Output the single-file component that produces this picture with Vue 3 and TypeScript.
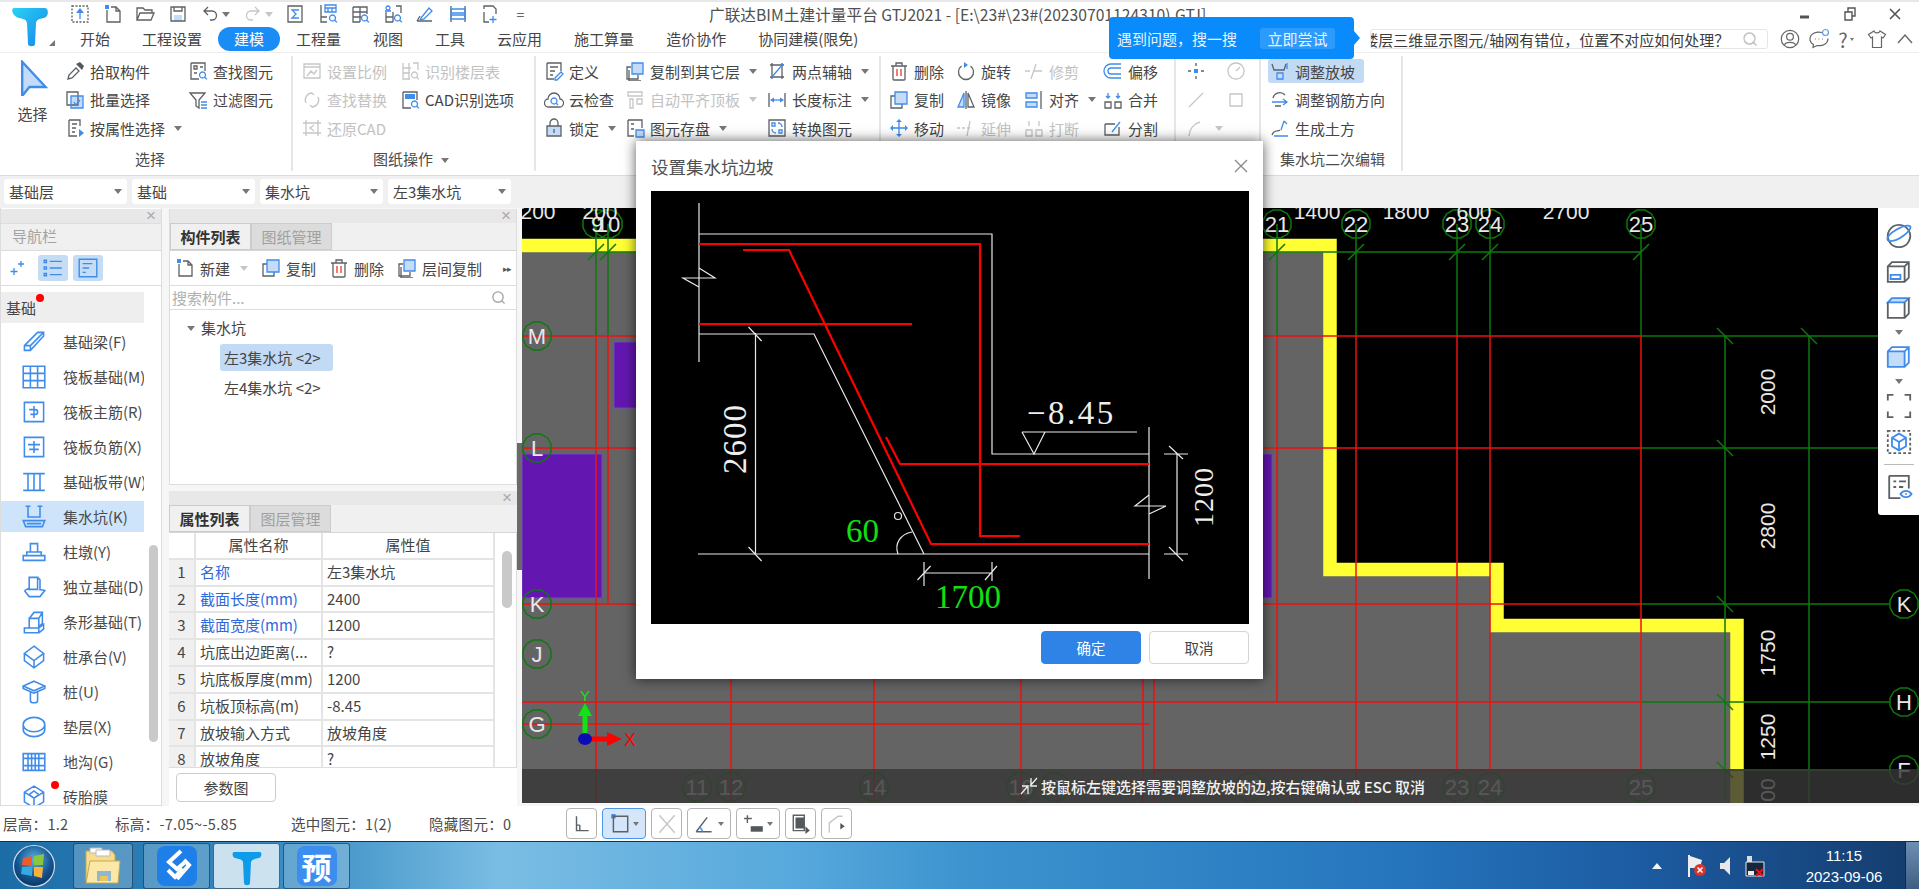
<template>
  <div class="app">
    <header class="top">
      <div class="logo">
        <svg width="42" height="42" viewBox="0 0 42 42">
          <defs>
            <linearGradient id="tlogo" x1="0" y1="0" x2="1" y2="1">
              <stop offset="0" stop-color="#2bd2f0" />
              <stop offset="1" stop-color="#1484f0" />
            </linearGradient>
          </defs>
          <path fill="url(#tlogo)" d="M4 2h31c4 0 4 9-1 10-5 1-7 1-8 5l-1 21c0 3-7 3-7 0l-1-21c-1-4-3-4-8-5C3 11 0 2 4 2z" />
        </svg>
        <i class="logo-tri"></i>
      </div>
      <div class="top-rows">
        <div class="row-qa">
          <div class="qa">
            <template v-for="q in quick" :key="q.n">
              <span class="qa-item" :class="{ 'qa-caret': q.c }">
                <Ico :n="q.n" />
                <i v-if="q.c" class="tri" :class="{ 'tri-off': q.n === 'redo' }"></i>
              </span>
            </template>
            <span class="qa-more">=</span>
          </div>
          <div class="title">广联达BIM土建计量平台 GTJ2021 - [E:\23#\23#(20230701124310).GTJ]</div>
          <div class="win">
            <svg width="14" height="14" viewBox="0 0 14 14"><path d="M2 10h9" stroke="#555" stroke-width="3" /></svg>
            <svg width="14" height="14" viewBox="0 0 14 14" fill="none" stroke="#555" stroke-width="1.4"><path d="M2 5h7v8H2z M5 5V1h7v8H9" /></svg>
            <svg width="14" height="14" viewBox="0 0 14 14" fill="none" stroke="#555" stroke-width="1.6"><path d="M2 2l10 10 M12 2L2 12" /></svg>
          </div>
        </div>
        <div class="row-tabs">
          <nav class="tabs">
            <span v-for="t in tabs" :key="t" class="tab" :class="{ 'tab-on': t === '建模' }">{{ t }}</span>
          </nav>
          <div class="search">
            <span class="search-text">楼层三维显示图元/轴网有错位，位置不对应如何处理？</span>
            <svg width="16" height="16" viewBox="0 0 16 16" fill="none" stroke="#c4c4c4" stroke-width="1.6"><path d="M7.5 2a5.5 5.5 0 1 1-.01 0z M11.5 11.5l3 3" /></svg>
          </div>
          <div class="user-tools">
            <svg width="20" height="20" viewBox="0 0 20 20" fill="none" stroke="#666" stroke-width="1.2"><circle cx="10" cy="10" r="8.7" /><circle cx="10" cy="7.8" r="3.4" /><path d="M4.5 16c1-3.4 10-3.4 11 0" /></svg>
            <svg width="22" height="22" viewBox="0 0 22 22" fill="none" stroke="#666" stroke-width="1.2"><path d="M14 4.5C8 3 2 6 2 11c0 2.5 1.5 4.5 3.5 5.500l-.5 3 4-2c6 1 11-2 11-7" /><path d="M7 11h.8 M10.5 11h.8 M14 11h.8" /><circle cx="17.5" cy="4.5" r="3" stroke="#5a9ee8" /></svg>
            <span class="help">?<i class="tri tri-sm"></i></span>
            <svg width="20" height="20" viewBox="0 0 20 20" fill="none" stroke="#666" stroke-width="1.2"><path d="M7 2L1.5 5.5 4 9l1.5-1v10.5h9V8L16 9l2.5-3.5L13 2c-.5 2.5-5.5 2.5-6 0z" /></svg>
            <svg width="20" height="20" viewBox="0 0 20 20" fill="none" stroke="#666" stroke-width="1.4"><path d="M3 14l7-8 7 8" /></svg>
          </div>
        </div>
      </div>
    </header>

    <section class="ribbon">
      <div v-for="g in groups" :key="g.key" class="rg" :style="{ width: g.w + 'px' }">
        <div class="rg-cols" :style="{ paddingLeft: g.pad + 'px' }">
          <div v-if="g.big" class="big">
            <Ico n="arrow" :s="36" />
            <span>选择</span>
          </div>
          <div v-for="(c, ci) in g.cols" :key="ci" class="rg-col" :style="{ width: c.w + 'px' }">
            <div v-for="it in c.items" :key="it.i + (it.t || '')" class="rb" :class="{ 'rb-off': it.off, 'rb-on': it.on }">
              <Ico :n="it.i" />
              <span v-if="it.t" class="rb-t">{{ it.t }}</span>
              <i v-if="it.c" class="tri" :class="{ 'tri-off': it.off }"></i>
            </div>
          </div>
        </div>
        <div class="rg-label" :style="{ paddingLeft: g.lx + 'px' }">
          {{ g.label }}<i v-if="g.lc" class="tri tri-label"></i>
        </div>
      </div>
    </section>

    <div class="combos">
      <div v-for="c in combos" :key="c" class="combo"><span>{{ c }}</span><i class="tri"></i></div>
    </div>

    <main class="main">
      <aside class="nav">
        <div class="strip"><span class="strip-x">×</span></div>
        <div class="nav-head">导航栏</div>
        <div class="nav-tools">
          <Ico n="sparkle" class="nav-spark" />
          <span class="nav-tool"><Ico n="listv" :s="22" /></span>
          <span class="nav-tool"><Ico n="cardv" :s="22" /></span>
        </div>
        <div class="nav-sec">基础<i class="dot"></i></div>
        <ul class="nav-list">
          <li v-for="n in navItems" :key="n.t" class="nav-item" :class="{ 'nav-on': n.on }">
            <Ico :n="n.i" :s="24" />
            <span>{{ n.t }}</span>
            <i v-if="n.dot" class="dot dot-item"></i>
          </li>
        </ul>
        <div class="nav-scroll"></div>
      </aside>

      <div class="panels">
        <section class="panel panel-list">
          <div class="strip"><span class="strip-x">×</span></div>
          <div class="ptabs"><span class="ptab ptab-on">构件列表</span><span class="ptab">图纸管理</span></div>
          <div class="ptools">
            <span class="ptool"><Ico n="newdoc" /> 新建 <i class="tri tri-off tri-new"></i></span>
            <span class="ptool"><Ico n="copy" /> 复制</span>
            <span class="ptool"><Ico n="del" /> 删除</span>
            <span class="ptool"><Ico n="copyl" /> 层间复制</span>
            <span class="ptool-more">▸▸</span>
          </div>
          <div class="psearch">
            <span>搜索构件...</span>
            <svg width="15" height="15" viewBox="0 0 16 16" fill="none" stroke="#aaa" stroke-width="1.5"><path d="M7.5 2a5.5 5.5 0 1 1-.01 0z M11.5 11.5l3 3" /></svg>
          </div>
          <div class="tree">
            <div class="tree-root"><i class="tri tri-tree"></i>集水坑</div>
            <div class="tree-leaf tree-on">左3集水坑 &lt;2&gt;</div>
            <div class="tree-leaf">左4集水坑 &lt;2&gt;</div>
          </div>
        </section>
        <section class="panel panel-props">
          <div class="strip"><span class="strip-x">×</span></div>
          <div class="ptabs"><span class="ptab ptab-on">属性列表</span><span class="ptab">图层管理</span></div>
          <div class="ptable-wrap">
            <div class="ptable">
              <div class="pcell pidx phead"></div>
              <div class="pcell phead">属性名称</div>
              <div class="pcell phead">属性值</div>
              <template v-for="(r, i) in props" :key="r.k">
                <div class="pcell pidx">{{ i + 1 }}</div>
                <div class="pcell" :class="{ 'pblue': i < 3 }">{{ r.k }}</div>
                <div class="pcell">{{ r.v }}</div>
              </template>
            </div>
            <div class="pscroll"><i></i></div>
          </div>
          <div class="pfoot"><button class="pbtn">参数图</button></div>
        </section>
      </div>

      <div class="gutter"><i></i></div>

      <div class="map">
        <svg class="map-svg" width="1397" height="595" viewBox="522 208 1397 595">
          <polygon fill="#646464" points="522,245 1330,245 1330,569 1497,569 1497,625 1737,625 1737,803 522,803" />
          <rect x="522" y="454" width="80" height="144" fill="#6317b0" stroke="#7446c4" />
          <rect x="614" y="342" width="60" height="66" fill="#6317b0" stroke="#7446c4" />
          <rect x="1230" y="454" width="42" height="144" fill="#6317b0" stroke="#7446c4" />
          <path d="M522 245.5H1330V569.5H1497V625.5H1737V810" fill="none" stroke="#ffff33" stroke-width="13.5" />
          <g fill="none" stroke-width="1.5">
            <path v-for="l in greenLines" :key="l" :d="l" stroke="#0d7a0d" />
            <path v-for="l in redLines" :key="l" :d="l" stroke="#f01010" />
            <polygon v-for="r in rings" :key="r.t + r.x" :points="ringPoints(r.x, r.y)" stroke="#0d7a0d" />
          </g>
          <text v-for="r in rings" :key="'t' + r.t + r.x" :x="r.x" :y="r.y + 8" class="map-t map-ring">{{ r.t }}</text>
          <text v-for="d in topDims" :key="d.t + d.x" :x="d.x" y="219" class="map-t">{{ d.t }}</text>
          <text v-for="d in sideDims" :key="d.t + d.y" class="map-t" :transform="`translate(1775 ${d.y}) rotate(-90)`">{{ d.t }}</text>
          <path d="M585 739V712" stroke="#12e312" stroke-width="5" />
          <path d="M578 716l7-13 7 13z" fill="#12e312" />
          <path d="M585 739h25" stroke="#f00" stroke-width="5" />
          <path d="M607 732l15 7-15 7z" fill="#f00" />
          <ellipse cx="585" cy="739" rx="7" ry="6" fill="#0c0cb4" />
          <text x="585" y="701" class="axis-y">Y</text>
          <text x="630" y="746" class="axis-x">X</text>
        </svg>
        <div class="banner">
          <svg width="20" height="20" viewBox="0 0 20 20" fill="none" stroke="#eee" stroke-width="1.3"><path d="M12 2v8h6 M11 10l7-8 M2 18l7-8 M3 10h6v8" /></svg>
          <span>按鼠标左键选择需要调整放坡的边,按右键确认或 ESC 取消</span>
        </div>
        <div class="view-tools">
          <Ico n="orbit" :s="28" />
          <Ico n="cube3d" :s="28" />
          <Ico n="cubet" :s="28" />
          <i class="tri"></i>
          <Ico n="cubef" :s="28" />
          <i class="tri"></i>
          <Ico n="frame" :s="28" />
          <Ico n="dcube" :s="28" />
          <hr />
          <Ico n="doceye" :s="28" />
        </div>
      </div>
    </main>

    <footer class="status">
      <span class="st st1">层高：1.2</span>
      <span class="st st2">标高：-7.05~-5.85</span>
      <span class="st st3">选中图元：1(2)</span>
      <span class="st st4">隐藏图元：0</span>
      <div class="st-tools">
        <span v-for="b in statusBtns" :key="b.i" class="st-btn" :class="{ 'st-on': b.on, 'st-wide': b.c }">
          <Ico :n="b.i" :s="22" />
          <i v-if="b.c" class="tri"></i>
        </span>
      </div>
    </footer>

    <div class="taskbar">
      <svg class="orb" width="44" height="44" viewBox="0 0 44 44">
        <defs>
          <radialGradient id="orbg" cx="0.5" cy="0.35" r="0.7">
            <stop offset="0" stop-color="#5ab4e8" />
            <stop offset="0.6" stop-color="#14548e" />
            <stop offset="1" stop-color="#0b2f5c" />
          </radialGradient>
        </defs>
        <circle cx="22" cy="22" r="20.5" fill="url(#orbg)" stroke="#c8dcec" stroke-width="1.2" />
        <path d="M11 14l9-2v9h-10z" fill="#ef5a28" />
        <path d="M22 12l10-2-1 11h-9z" fill="#8cc63f" />
        <path d="M10 23h10v9l-11-2z" fill="#36a9e1" />
        <path d="M22 23h9l-1 11-8-2z" fill="#fbb03b" />
      </svg>
      <div class="task task-folder">
        <svg width="42" height="42" viewBox="0 0 42 42">
          <path d="M4 6h26l3 4v26H4z" fill="#f6dc8c" stroke="#c8a84e" />
          <path d="M8 3h12v5H8z" fill="#fff" stroke="#b9b9b9" />
          <path d="M14 5h14v6H14z" fill="#fff" stroke="#b9b9b9" />
          <path d="M8 16h30l-2 22H4z" fill="#fbe8a8" stroke="#c8a84e" />
          <path d="M15 26h14v10H15z" fill="#8fb7d2" />
          <path d="M18 31h8v5h-8z" fill="#e8c85e" />
        </svg>
      </div>
      <div class="task">
        <span class="tile">
          <svg width="30" height="36" viewBox="0 0 30 36" fill="none" stroke="#fff" stroke-width="4"><path d="M19 3L7 14l8 7 7-6 M6 22l7 7 8-8 M22 12l5 5-12 14" /></svg>
        </span>
      </div>
      <div class="task task-on">
        <svg width="30" height="42" viewBox="0 0 30 42">
          <path fill="#0e9be8" d="M2 7h26c2 0 2 5-1 6-4 1-7 1-8 4l-1 21c0 3-6 3-6 0l-1-21c-1-3-4-3-8-4C0 12 0 7 2 7z" />
        </svg>
      </div>
      <div class="task"><span class="tile tile-yu">预</span></div>
      <div class="tray">
        <i class="tray-up"></i>
        <svg width="20" height="24" viewBox="0 0 20 24"><path d="M2 1v22" stroke="#eee" stroke-width="2" /><path d="M3 2l12 4-1 4 3 4H3z" fill="#eee" /><circle cx="13" cy="16" r="6" fill="#d8322a" /><path d="M10.5 13.5l5 5 M15.5 13.5l-5 5" stroke="#fff" stroke-width="1.5" /></svg>
        <svg width="14" height="24" viewBox="0 0 14 24"><path d="M2 9h4l6-6v18l-6-6H2z" fill="#e8e8e8" /></svg>
        <svg width="24" height="24" viewBox="0 0 24 24"><path d="M4 2h5v8H4z" fill="#ddd" /><path d="M3 8h18v14H3z" fill="#16263e" stroke="#e8e8e8" /><path d="M5 17h6v4H5z" fill="#eee" /><path d="M13 15l7 7 M20 15l-7 7" stroke="#e21818" stroke-width="2" /></svg>
        <div class="clock"><span>11:15</span><span>2023-09-06</span></div>
        <div class="show-desk"></div>
      </div>
    </div>

    <div class="tip">
      <span>遇到问题，搜一搜</span>
      <span class="tip-btn">立即尝试</span>
    </div>

    <div class="dialog">
      <div class="dlg-head">
        <span>设置集水坑边坡</span>
        <svg width="14" height="14" viewBox="0 0 14 14" stroke="#888" stroke-width="1.3"><path d="M1 1l12 12 M13 1L1 13" /></svg>
      </div>
      <svg class="dlg-draw" width="598" height="433" viewBox="0 0 598 433" fill="none">
        <g stroke="#e8e8e8" stroke-width="1.2">
          <path d="M48 12V171 M48 43H341V263H498 M48 143H163L273 363 M47 363H498 M498 236V388" />
          <path d="M48 77L64 87H32L48 96 M498 304L484 315H515L498 323" />
          <path d="M104.5 142V363 M97.5 136L110.6 150 M97.5 356L110.6 370" />
          <path d="M371 241H486 M371 241L383 263 394 241" />
          <path d="M526 263V363 M518 255L532 268 M518 356L532 370 M513 263H537 M513 363H537" />
          <path d="M273 382H341 M273 371V395 M341 371V390 M266.5 389L279.6 375 M334 389L346 375" />
          <path d="M247 363C243 352 250 343 261 341" />
          <circle cx="247" cy="325" r="3.5" />
        </g>
        <g stroke="#ff0000" stroke-width="2.2">
          <path d="M48 53H329V345H369 M92 59H138L280 353H498 M48 133H261 M235 246L249 273H498" />
        </g>
        <text x="376" y="233" class="cad cad-w cad-lv">−8.45</text>
        <text class="cad cad-w" transform="translate(95 283) rotate(-90)">2600</text>
        <text class="cad cad-w cad-s" transform="translate(562 336) rotate(-90)">1200</text>
        <text x="284" y="417" class="cad cad-g">1700</text>
        <text x="195" y="351" class="cad cad-g">60</text>
      </svg>
      <div class="dlg-foot">
        <button class="dlg-btn dlg-ok">确定</button>
        <button class="dlg-btn">取消</button>
      </div>
    </div>
  </div>
</template>

<script setup lang="ts">
import { h } from 'vue'

type IconDef = { g?: string; b?: string; x?: string; r?: string; dg?: string; f?: string; fb?: string; fg?: string }

const MAG = 'M14.5 11a3 3 0 1 1-.01 0z M16.7 16.2l2.2 2.2'

const icons: Record<string, IconDef> = {
  upload: { dg: 'M2 2h16v16H2z', b: 'M10 15V7', fb: 'M6 9l4-5 4 5z' },
  newdoc: { g: 'M4 6v12h13V7l-4-4H8 M13 3v4h4', fb: 'M2 1h4v4H2z' },
  open: { g: 'M2 16V4h6l2 2h7v3 M2 16l3-7h14l-3 7z' },
  save: { g: 'M3 3h14v14H3z M6 3v4h8V3', f: 'M6 11h8v6H6z' },
  undo: { g: 'M8 3L4 7l4 4 M4 7h8a4.5 4.5 0 0 1 0 9h-2' },
  redo: { x: 'M12 3l4 4-4 4 M16 7H8a4.5 4.5 0 0 0 0 9h2' },
  sigma: { g: 'M3 2h14v16H3z', b: 'M14 6H7l4 4-4 4h7' },
  qtable: { g: 'M3 1v17h6 M3 13h6', b: 'M7 1h11v7H7z M7 4h11 M10 4v4 M14 4v4 ' + MAG },
  gridq: { g: 'M3 3h14v7 M3 3v15h7 M3 8h14 M3 13h8 M10 3v15', b: MAG },
  colq: { g: 'M3 8v10h7 M3 13h7 M10 8v10 M13 2h5v7', b: 'M5 2a2 2 0 1 1-.01 0z M2 7h6 ' + MAG },
  pen: { g: 'M2 17h15 M2 17l3-5', b: 'M6 14l8-10 3 3-8 8-4 1z' },
  rebar: { g: 'M3 2v16 M17 2v16', b: 'M3 5h14v4H3z M3 11h14v4H3z' },
  dashdoc: { g: 'M4 5V2h9l3 3v5 M4 8v10h5', b: 'M13 12v7 M9.5 15.5h7' },
  arrow: { f: 'M4 1l13 14-9 0-4 5z', b: 'M4 1l13 14-9 0-4 5z' },
  pick: { g: 'M3 18l1-4 7-7 3 3-7 7z', fg: 'M11 3l6 6 2-4-4-4z' },
  batch: { g: 'M2 2h11v13H2z', f: 'M6 6h12v12H6z', b: 'M6 6h12v12H6z M9 12l2 3 4-5' },
  attr: { g: 'M4 2h11v6 M4 2v16h8 M7 6h5 M7 10h4 M7 14h3', fb: 'M14 11l5 4-5 4z' },
  find: { g: 'M3 2h14v8 M3 2v16h8 M6 5h3v3H6z M6 12h3 M12 6h3', b: MAG },
  filter: { g: 'M2 3h15l-6 7v8l-3-2v-6z', b: 'M13 12h6 M13 15h6 M13 18h6' },
  scale: { x: 'M2 3h16v14H2z M2 6h16 M5 15l4-5 3 3 3-4' },
  floors: { x: 'M3 2v16h7 M3 7h8 M3 12h7 M9 2v16 M13 2h5v7 ' + MAG },
  replace: { x: 'M10 3a7 7 0 0 0-6 10 M10 17a7 7 0 0 0 6-10 M10 3l2 2 M10 17l-2-2' },
  restore: { x: 'M4 2v16 M16 2v16 M1 5h18 M1 15h18 M12 7l-4 3 4 3' },
  cad: { g: 'M3 2h14v8 M3 2v16h8', fb: 'M5 4h10v5H5z', b: MAG },
  define: { g: 'M3 2h14v8 M3 2v16h7 M6 6h8 M6 10h5 M6 14h3', b: 'M11 17l6-6 2 2-6 6h-2z' },
  cloud: { g: 'M5 17a4 4 0 0 1-1-8 6 6 0 0 1 12 0 4 4 0 0 1-1 8z', b: 'M10 8a3 3 0 1 1-.01 0z M12 13l2 2' },
  lock: { f: 'M3 8h14v10H3z', g: 'M6 8V5a4 4 0 0 1 8 0v3 M3 8h14v10H3z M10 11v4' },
  copyl: { g: 'M6 6H2v12h11v-4 M4 9v11h12', f: 'M7 2h11v11H7z', b: 'M7 2h11v11H7z' },
  autoalign: { x: 'M3 2h14v4H3z M5 9h3v9H5z M12 9h5v5h-5z' },
  store: { g: 'M3 2h14v8 M3 2v16h6 M6 6h3 M6 11h3', f: 'M11 12h8v7h-8z', b: 'M11 12h8v7h-8z' },
  twop: { g: 'M3 4h14 M3 16h14 M5 2v16 M15 2v16', b: 'M4 17L16 3' },
  lenm: { g: 'M2 3v14 M18 3v14', b: 'M4 10h12', fb: 'M3 10l4-2.5v5z M17 10l-4-2.5v5z' },
  conv: { g: 'M2 2h16v16H2z', b: 'M5 5h3v3H5z M12 12h3v3h-3z M11 5a4 4 0 0 1 4 4 M9 15a4 4 0 0 1-4-4' },
  del: { g: 'M4 5h12v13a1 1 0 0 1-1 1H5a1 1 0 0 1-1-1z M2 5h16 M7 5V2h6v3', r: 'M8 8v7 M12 8v7' },
  rotate: { g: 'M14.5 5a7.5 7.5 0 1 1-9 0', fb: 'M8 1l4 3-4 3z' },
  trim: { x: 'M1 10h5 M9 10h9 M12 3L7 18' },
  offset: { b: 'M18 3H8a7 7 0 0 0 0 14h10 M18 7H8a3 3 0 0 0 0 6h10' },
  copy: { g: 'M6 6H2v12h11v-4', f: 'M6 2h12v12H6z', b: 'M6 2h12v12H6z' },
  mirror: { f: 'M8 3L2 17h6z', b: 'M8 3L2 17h6z', g: 'M12 3l6 14h-6z M10 1v18' },
  align: { f: 'M2 3h11v5H2z M2 12h11v5H2z', b: 'M2 3h11v5H2z M2 12h11v5H2z', g: 'M17 1v18' },
  merge: { g: 'M2 12h6v6H2z M12 12h6v6h-6z', b: 'M5 3v5 M3 6l2 2 2-2 M15 3v5 M13 6l2 2 2-2' },
  move: { b: 'M10 3v14 M3 10h14', fb: 'M10 1l-3 3h6z M10 19l-3-3h6z M1 10l3-3v6z M19 10l-3-3v6z' },
  extend: { x: 'M1 10h3 M6 10h3 M11 10h3 M14 3l-3 15' },
  breaks: { x: 'M2 12h6v6H2z M12 12h6v6h-6z M5 3v5 M15 3v5' },
  split: { g: 'M2 6h10 M2 6v11h14V9', b: 'M9 14l8-10' },
  snap: { g: 'M10 2v3 M10 15v3 M2 10h3 M15 10h3', fb: 'M8 8h4v4H8z' },
  gauge: { x: 'M10 2a8 8 0 1 1-.01 0 M10 10l4-4' },
  seg: { x: 'M3 17L17 3' },
  sq: { x: 'M4 4h12v12H4z' },
  arc: { x: 'M3 18a15 15 0 0 1 11-14' },
  slope: { g: 'M2 3l2 6h10l2-6', f: 'M7 12h6v6H7z', b: 'M7 12h6v6H7z M17 2v6' },
  redir: { g: 'M3 8a7 7 0 0 1 12-3 M5 16h6', b: 'M2 12h14 M13 9l4 3-4 3' },
  earth: { g: 'M2 17c2-6 6-3 8-5', b: 'M4 18h14 M14 3l-3 9 M14 3l3 3' },
  sparkle: { b: 'M13 3v6 M10 6h6 M6 10v7 M2.5 13.5h7' },
  listv: { b: 'M7 4h11 M7 10h11 M7 16h11 M2 3h2v2H2z M2 9h2v2H2z M2 15h2v2H2z' },
  cardv: { b: 'M2 2h16v16H2z M5 6h9 M5 10h6 M5 14h3' },
  beam: { b: 'M2 13L13 2h5v3L7 17H2z M2 13h5v4 M7 13L18 2' },
  raft: { b: 'M1 1h18v18H1z M1 7h18 M1 13h18 M7 1v18 M13 1v18' },
  rafm: { b: 'M2 2h16v16H2z M10 5v10 M6 8h5a2 2 0 0 1 0 4H7' },
  rafn: { b: 'M2 2h16v16H2z M10 5v10 M5 8h10 M6 12h8' },
  band: { b: 'M1 3h18 M1 17h18 M5 3v14 M10 3v14 M15 3v14' },
  sump: { b: 'M3 1h4 M13 1h4 M5 1v9h10V1 M1 13h18l-2 5H3z M4 15.5h12' },
  pier: { b: 'M7 3h6v7H7z M4 10h12v3H4z M1 13h18v4H1z' },
  ind: { b: 'M6 2h7v10H6z M13 2l2 2v9 M2 13l4-2 M2 13l4 5h9l4-5-4-1' },
  strip: { b: 'M6 7l4-5h7v9l-3 3 M6 7h8v8H6z M14 7l3-5 M2 15h12v4H2z M14 15l4-3v4l-4 3' },
  cap: { b: 'M10 1l8 6-8 6-8-6z M2 7v6l8 6 8-6V7 M10 13v6' },
  pile: { b: 'M10 1l9 4-9 4-9-4z M1 5v2l9 4 9-4V5 M7 10v7a3 2 0 0 0 6 0v-7' },
  cushion: { b: 'M1 8a9 6 0 1 0 18 0a9 6 0 1 0-18 0 M1 8v4a9 6 0 0 0 18 0V8' },
  ditch: { b: 'M1 3h18v14H1z M1 7h18 M1 13h18 M5 3v14 M8 3v14 M11 3v14 M14 3v14' },
  brick: { b: 'M10 1l8 5v8l-8 5-8-5V6z M2 6l8 5 8-5 M10 11v8 M10 5l4 3-4 3-4-3z' },
  orbit: { g: 'M10 2a8 8 0 1 1-.01 0', b: 'M2 13C0 9 14 1 18 3c2 3-11 13-16 10z' },
  cube3d: { g: 'M2 6l3-3h12v11l-3 3H2z M2 6h12v11 M14 6l3-3', b: 'M4 12h7v3H4z' },
  cubet: { f: 'M2 6l3-3h12l-3 3z', b: 'M2 6l3-3h12l-3 3z', g: 'M2 6v11h12V6 M14 17l3-3V3' },
  cubef: { f: 'M2 6h12v11H2z', b: 'M2 6l3-3h12v11l-3 3H2z M2 6h12v11 M14 6l3-3' },
  frame: { g: 'M2 6V2h4 M14 2h4v4 M18 14v4h-4 M6 18H2v-4' },
  dcube: { dg: 'M2 2h16v16H2z', b: 'M10 4l5 3v6l-5 3-5-3V7z M5 7l5 3 5-3 M10 10v6' },
  doceye: { g: 'M3 2h14v9 M3 2v16h8 M6 6h2 M10 6h5 M6 10h2 M10 10h3', b: 'M11 15c2-3 6-3 8 0-2 3-6 3-8 0z M15 14.5v1' },
  stCorner: { g: 'M5 3v13h11 M8 11v5 M5 11h3' },
  stRect: { g: 'M4 3h13v14H4z', fb: 'M2 1h4v4H2z' },
  stX: { x: 'M3 2l14 16 M17 2L3 18' },
  stAngle: { g: 'M2 17L12 4 M2 17h14', b: 'M5 12l3 5' },
  stPlus: { g: 'M4 2v7 M1 5h7', fg: 'M7 12h11v5H7z' },
  stDoc: { g: 'M3 2h10v14H3z', fg: 'M5 4h8v10H5z M14 12l4 4-4 3z' },
  stCurve: { x: 'M3 18V9l8-6h4', fg: 'M13 9l4 3-4 3z' }
}

const strokeOf: Record<string, string> = { g: '#5c6166', b: '#3f8ceb', x: '#c6c6c6', r: '#e5392b', dg: '#5c6166' }
const fillOf: Record<string, string> = { f: '#c4dcf8', fb: '#3f8ceb', fg: '#54585c' }

const Ico = (p: { n: string; s?: number }) => {
  const def = icons[p.n] || {}
  const kids = Object.entries(def)
    .sort(([a], [b]) => (a[0] === 'f' ? -1 : 0) - (b[0] === 'f' ? -1 : 0))
    .map(([k, d]) =>
      k[0] === 'f'
        ? h('path', { d, fill: fillOf[k] })
        : h('path', {
            d,
            fill: 'none',
            stroke: strokeOf[k],
            'stroke-width': 1.3,
            'stroke-dasharray': k === 'dg' ? '2 1.5' : undefined
          })
    )
  return h('svg', { width: p.s ?? 20, height: p.s ?? 20, viewBox: '0 0 20 20', class: 'ico' }, kids)
}
Ico.props = ['n', 's']

const quick = [
  { n: 'upload' }, { n: 'newdoc' }, { n: 'open' }, { n: 'save' },
  { n: 'undo', c: true }, { n: 'redo', c: true },
  { n: 'sigma' }, { n: 'qtable' }, { n: 'gridq' }, { n: 'colq' }, { n: 'pen' }, { n: 'rebar' }, { n: 'dashdoc' }
]

const tabs = ['开始', '工程设置', '建模', '工程量', '视图', '工具', '云应用', '施工算量', '造价协作', '协同建模(限免)']

type RItem = { i: string; t?: string; off?: boolean; c?: boolean; on?: boolean }
type RGroup = { key: string; w: number; pad: number; big?: boolean; label: string; lx: number; lc?: boolean; cols: { w: number; items: RItem[] }[] }

const groups: RGroup[] = [
  {
    key: 'sel', w: 293, pad: 0, big: true, label: '选择', lx: 135,
    cols: [
      { w: 123, items: [{ i: 'pick', t: '拾取构件' }, { i: 'batch', t: '批量选择' }, { i: 'attr', t: '按属性选择', c: true }] },
      { w: 100, items: [{ i: 'find', t: '查找图元' }, { i: 'filter', t: '过滤图元' }] }
    ]
  },
  {
    key: 'dwg', w: 243, pad: 9, label: '图纸操作', lx: 80, lc: true,
    cols: [
      { w: 98, items: [{ i: 'scale', t: '设置比例', off: true }, { i: 'replace', t: '查找替换', off: true }, { i: 'restore', t: '还原CAD', off: true }] },
      { w: 120, items: [{ i: 'floors', t: '识别楼层表', off: true }, { i: 'cad', t: 'CAD识别选项' }] }
    ]
  },
  {
    key: 'gen', w: 345, pad: 8, label: '', lx: 0,
    cols: [
      { w: 81, items: [{ i: 'define', t: '定义' }, { i: 'cloud', t: '云检查' }, { i: 'lock', t: '锁定', c: true }] },
      { w: 142, items: [{ i: 'copyl', t: '复制到其它层', c: true }, { i: 'autoalign', t: '自动平齐顶板', off: true, c: true }, { i: 'store', t: '图元存盘', c: true }] },
      { w: 110, items: [{ i: 'twop', t: '两点辅轴', c: true }, { i: 'lenm', t: '长度标注', c: true }, { i: 'conv', t: '转换图元' }] }
    ]
  },
  {
    key: 'edit', w: 295, pad: 8, label: '', lx: 0,
    cols: [
      { w: 67, items: [{ i: 'del', t: '删除' }, { i: 'copy', t: '复制' }, { i: 'move', t: '移动' }] },
      { w: 68, items: [{ i: 'rotate', t: '旋转' }, { i: 'mirror', t: '镜像' }, { i: 'extend', t: '延伸', off: true }] },
      { w: 79, items: [{ i: 'trim', t: '修剪', off: true }, { i: 'align', t: '对齐', c: true }, { i: 'breaks', t: '打断', off: true }] },
      { w: 65, items: [{ i: 'offset', t: '偏移' }, { i: 'merge', t: '合并' }, { i: 'split', t: '分割' }] }
    ]
  },
  {
    key: 'draw', w: 85, pad: 10, label: '', lx: 0,
    cols: [
      { w: 40, items: [{ i: 'snap' }, { i: 'seg' }, { i: 'arc', c: true, off: true }] },
      { w: 30, items: [{ i: 'gauge' }, { i: 'sq' }] }
    ]
  },
  {
    key: 'sump', w: 142, pad: 9, label: '集水坑二次编辑', lx: 19,
    cols: [
      { w: 125, items: [{ i: 'slope', t: '调整放坡', on: true }, { i: 'redir', t: '调整钢筋方向' }, { i: 'earth', t: '生成土方' }] }
    ]
  }
]

const combos = ['基础层', '基础', '集水坑', '左3集水坑']

const navItems = [
  { i: 'beam', t: '基础梁(F)' },
  { i: 'raft', t: '筏板基础(M)' },
  { i: 'rafm', t: '筏板主筋(R)' },
  { i: 'rafn', t: '筏板负筋(X)' },
  { i: 'band', t: '基础板带(W)' },
  { i: 'sump', t: '集水坑(K)', on: true },
  { i: 'pier', t: '柱墩(Y)' },
  { i: 'ind', t: '独立基础(D)' },
  { i: 'strip', t: '条形基础(T)' },
  { i: 'cap', t: '桩承台(V)' },
  { i: 'pile', t: '桩(U)' },
  { i: 'cushion', t: '垫层(X)' },
  { i: 'ditch', t: '地沟(G)' },
  { i: 'brick', t: '砖胎膜', dot: true }
]

const props = [
  { k: '名称', v: '左3集水坑' },
  { k: '截面长度(mm)', v: '2400' },
  { k: '截面宽度(mm)', v: '1200' },
  { k: '坑底出边距离(...', v: '?' },
  { k: '坑底板厚度(mm)', v: '1200' },
  { k: '坑板顶标高(m)', v: '-8.45' },
  { k: '放坡输入方式', v: '放坡角度' },
  { k: '放坡角度', v: '?' }
]

const hy = [336, 448, 604, 702]
const topX = [596, 608, 1277, 1356, 1457, 1490, 1641]

const greenLines: string[] = [
  'M596 252H1641',
  ...topX.map((x) => `M${x} 224V336`),
  ...topX.map((x) => `M${x - 8} 260L${x + 8} 244`),
  'M1641 336H1878',
  'M1641 448H1878',
  'M1641 604H1890',
  'M1641 702H1890',
  'M1641 770H1890',
  'M1725 336V803',
  'M1809 336V803',
  ...[336, 448, 604, 702, 770].map((y) => `M1717 ${y - 8}L1733 ${y + 8}`),
  'M1801 328L1817 344'
]

const redLines: string[] = [
  ...hy.map((y) => `M522 ${y}H1641`),
  'M522 724H1150',
  'M1154 770H1641',
  'M608 336V604',
  'M1277 336V702',
  ...[596, 731, 874, 1021, 1143, 1154, 1356].map((x) => `M${x} 336V803`),
  'M1457 336V770',
  'M1490 336V770',
  'M1641 336V770'
]

const rings = [
  { t: 'M', x: 537, y: 336 }, { t: 'L', x: 537, y: 448 }, { t: 'K', x: 537, y: 604 }, { t: 'J', x: 537, y: 654 }, { t: 'G', x: 537, y: 724 },
  { t: '9', x: 597, y: 224 }, { t: '10', x: 608, y: 224 }, { t: '21', x: 1277, y: 224 }, { t: '22', x: 1356, y: 224 },
  { t: '23', x: 1457, y: 224 }, { t: '24', x: 1490, y: 224 }, { t: '25', x: 1641, y: 224 },
  { t: 'K', x: 1904, y: 604 }, { t: 'H', x: 1904, y: 702 }, { t: 'F', x: 1904, y: 770 },
  { t: '11', x: 697, y: 787 }, { t: '12', x: 731, y: 787 }, { t: '14', x: 874, y: 787 }, { t: '16', x: 1021, y: 787 },
  { t: '17', x: 1055, y: 787 }, { t: '20', x: 1250, y: 787 }, { t: '23', x: 1457, y: 787 }, { t: '24', x: 1490, y: 787 }, { t: '25', x: 1641, y: 787 }
]

// twelve-sided axis bubble, as the CAD view draws it
function ringPoints(cx: number, cy: number) {
  const pts: string[] = []
  for (let i = 0; i < 12; i++) {
    const a = (i * Math.PI) / 6 + Math.PI / 12
    pts.push(`${(cx + 14.5 * Math.cos(a)).toFixed(1)},${(cy + 14.5 * Math.sin(a)).toFixed(1)}`)
  }
  return pts.join(' ')
}

const topDims = [
  { t: '200', x: 538 }, { t: '200', x: 600 }, { t: '1400', x: 1317 }, { t: '1800', x: 1406 }, { t: '600', x: 1474 }, { t: '2700', x: 1566 }
]

const sideDims = [
  { t: '2000', y: 392 }, { t: '2800', y: 526 }, { t: '1750', y: 653 }, { t: '1250', y: 737 }, { t: '00', y: 790 }
]

const statusBtns = [
  { i: 'stCorner' },
  { i: 'stRect', on: true, c: true },
  { i: 'stX' },
  { i: 'stAngle', c: true },
  { i: 'stPlus', c: true },
  { i: 'stDoc' },
  { i: 'stCurve' }
]
</script>

<style scoped>
.app {
  position: relative;
  width: 1919px;
  height: 889px;
  overflow: hidden;
  display: flex;
  flex-direction: column;
  background: #fff;
  color: #454545;
  font-family: "Noto Sans CJK SC", "Liberation Sans", sans-serif;
  font-size: 15px;
}
.ico { display: block; flex: none; }

.tri {
  display: inline-block;
  width: 0;
  height: 0;
  border-left: 4px solid transparent;
  border-right: 4px solid transparent;
  border-top: 5px solid #777;
}
.tri-off { border-top-color: #c6c6c6; }

.top { display: flex; height: 52px; flex: none; border-top: 2px solid #e8e8e8; box-sizing: border-box; }
.logo { position: relative; width: 64px; flex: none; padding: 4px 0 0 10px; box-sizing: border-box; }
.logo-tri {
  position: absolute;
  left: 49px;
  top: 38px;
  border-left: 6px solid transparent;
  border-bottom: 6px solid #777;
}
.top-rows { flex: 1; display: flex; flex-direction: column; min-width: 0; }
.row-qa { display: flex; align-items: center; height: 24px; padding-left: 6px; }
.qa { display: flex; align-items: center; gap: 12.5px; width: 456px; flex: none; }
.qa-item { display: flex; align-items: center; width: 20px; gap: 2px; }
.qa-caret { width: 30px; }
.qa-more { font-size: 14px; line-height: 14px; color: #666; margin-left: 4px; }
.title { margin-left: 183px; font-size: 15.7px; white-space: nowrap; color: #505050; }
.win { margin-left: auto; display: flex; gap: 31px; padding-right: 17px; }
.row-tabs { display: flex; align-items: center; height: 26px; }
.tabs { display: flex; align-items: center; }
.tab { padding: 0 16px; line-height: 24px; white-space: nowrap; }
.tab-on { background: #1a8cf5; color: #fff; border-radius: 12px; }
.search {
  margin-left: 496px;
  width: 398px;
  height: 20px;
  flex: none;
  box-sizing: border-box;
  border: 1px solid #e6e6e6;
  border-radius: 3px;
  display: flex;
  align-items: center;
  justify-content: space-between;
  padding-right: 9px;
  overflow: hidden;
}
.search-text { font-size: 15px; margin-left: -8px; white-space: nowrap; color: #3c3c3c; }
.user-tools { display: flex; align-items: center; gap: 8px; margin-left: 12px; }
.help { font-size: 20px; color: #666; display: flex; align-items: center; gap: 2px; width: 21px; }
.tri-sm { border-width: 3px 2px 0; }

.ribbon { display: flex; height: 123px; flex: none; border-top: 1px solid #eee; box-sizing: border-box; padding-top: 3px; }
.rg { height: 115px; flex: none; display: flex; flex-direction: column; border-right: 2px solid #e6e6e6; box-sizing: border-box; }
.rg-cols { display: flex; height: 92px; padding-top: 3px; box-sizing: border-box; }
.big { width: 65px; flex: none; display: flex; flex-direction: column; align-items: center; padding-top: 1px; gap: 7px; }
.rg-col { flex: none; display: flex; flex-direction: column; gap: 4.5px; }
.rb { display: flex; align-items: center; gap: 5px; height: 24px; white-space: nowrap; }
.rb .tri { margin-left: 4px; }
.rb-off { color: #c2c2c2; }
.rb-on { background: #c3daf4; border-radius: 3px; width: 96px; margin-left: -2px; padding-left: 2px; box-sizing: border-box; }
.rg-label { height: 21px; line-height: 21px; white-space: nowrap; color: #4c4c4c; }
.tri-label { margin-left: 8px; vertical-align: middle; }

.combos { display: flex; height: 33px; flex: none; gap: 5px; background: #f0f0f0; border-top: 1px solid #dcdcdc; box-sizing: border-box; padding: 3px 0 4px 4px; }
.combo {
  width: 123px;
  background: #fff;
  border-radius: 3px;
  display: flex;
  align-items: center;
  justify-content: space-between;
  padding: 0 5px;
  box-sizing: border-box;
}

.main { display: flex; height: 598px; flex: none; background: #f6f6f6; }
.strip { height: 14px; background: #e8e8e8; display: flex; justify-content: flex-end; align-items: center; padding-right: 5px; flex: none; }
.strip-x { color: #aaa; font-size: 17px; line-height: 14px; font-family: "Liberation Sans", sans-serif; }

.nav {
  position: relative;
  width: 162px;
  flex: none;
  background: #fff;
  display: flex;
  flex-direction: column;
  overflow: hidden;
  padding-top: 1px;
  box-sizing: border-box;
  border-right: 1px solid #ddd;
  border-left: 1px solid #ddd;
  border-bottom: 1px solid #ddd;
}
.nav-head { height: 28px; line-height: 24px; background: #f0f0f0; color: #a3a3a3; padding-left: 11px; font-size: 15px; border-top: 1px solid #ddd; border-bottom: 1px solid #ddd; box-sizing: border-box; flex: none; }
.nav-tools { height: 35px; display: flex; align-items: center; gap: 5px; border-bottom: 1px solid #ddd; box-sizing: border-box; padding-left: 37px; position: relative; flex: none; }
.nav-spark { position: absolute; left: 7px; top: 7px; }
.nav-tool { width: 30px; height: 26px; background: #c5dcf5; border-radius: 3px; display: flex; align-items: center; justify-content: center; }
.nav-sec { position: relative; margin-top: 6px; width: 143px; height: 31px; line-height: 32px; background: #eee; padding-left: 5px; box-sizing: border-box; flex: none; }
.dot { position: absolute; left: 35px; top: 2px; width: 8px; height: 8px; background: #f00; border-radius: 50%; }
.nav-list { list-style: none; margin: 3px 0 0; padding: 0; width: 143px; }
.nav-item { position: relative; height: 31px; margin-bottom: 4px; display: flex; align-items: center; gap: 17px; padding-left: 21px; white-space: nowrap; overflow: hidden; color: #4a4a4a; }
.nav-on { background: #cde4fb; }
.dot-item { left: 50px; top: 0; }
.nav-scroll { position: absolute; left: 148px; top: 337px; width: 9px; height: 197px; background: #c9c9c9; border-radius: 5px; }

.panels { width: 348px; flex: none; margin-left: 7px; display: flex; flex-direction: column; gap: 6px; padding-top: 1px; box-sizing: border-box; }
.panel { background: #fff; border: 1px solid #ddd; border-top: 0; box-sizing: border-box; display: flex; flex-direction: column; }
.panel-list { height: 276px; flex: none; }
.panel-props { flex: 1; min-height: 0; border: 0; }
.ptabs { display: flex; height: 28px; flex: none; background: #f0f0f0; border-bottom: 1px solid #d6d6d6; box-sizing: border-box; }
.ptab { width: 81px; line-height: 26px; text-align: center; background: #dcdcdc; color: #a0a0a0; border: 1px solid #ccc; box-sizing: border-box; }
.ptab-on { background: #f0f0f0; color: #333; font-weight: 700; }
.ptools { display: flex; align-items: center; height: 35px; flex: none; padding-left: 5px; gap: 13px; border-bottom: 1px solid #ddd; box-sizing: border-box; position: relative; }
.ptool { display: flex; align-items: center; gap: 5px; white-space: nowrap; }
.tri-new { margin-left: 5px; }
.ptool-more { position: absolute; right: 5px; font-size: 9px; color: #555; letter-spacing: -1px; }
.psearch { height: 24px; flex: none; display: flex; align-items: center; justify-content: space-between; padding: 0 10px 0 2px; color: #b0b0b0; border-bottom: 1px solid #ddd; box-sizing: border-box; }
.tree { flex: 1; padding-top: 5px; }
.tree-root { height: 26px; line-height: 26px; padding-left: 17px; display: flex; align-items: center; gap: 6px; }
.tri-tree { border-width: 5px 4px 0; }
.tree-leaf { margin: 3px 0 0 50px; width: 113px; box-sizing: border-box; height: 27px; line-height: 27px; padding-left: 4px; border-radius: 3px; white-space: nowrap; }
.tree-on { background: #c3daf4; }

.ptable-wrap { display: flex; height: 235px; flex: none; overflow: hidden; background: #fff; border-right: 1px solid #ddd; border-bottom: 1px solid #ddd; box-sizing: border-box; }
.ptable { width: 326px; flex: none; display: grid; grid-template-columns: 27px 127px 172px; grid-auto-rows: 26.8px; background: #fff; border-right: 1px solid #ddd; box-sizing: border-box; align-content: start; }
.pcell { border-bottom: 2px solid #e4e4e4; border-right: 2px solid #e4e4e4; box-sizing: border-box; padding-left: 4px; line-height: 24px; white-space: nowrap; overflow: hidden; }
.phead { text-align: center; padding: 0; }
.pidx { background: #f0f0f0; text-align: center; padding: 0; }
.pidx.phead { background: #fff; }
.pblue { color: #2f68dc; }
.pscroll { flex: 1; position: relative; }
.pscroll i { position: absolute; left: 7px; top: 18px; width: 10px; height: 57px; background: #c9c9c9; border-radius: 5px; }
.pfoot { flex: 1; background: #fff; padding: 5px 0 0 7px; box-sizing: border-box; }
.pbtn { width: 100px; height: 29px; font: inherit; color: #444; background: #fff; border: 1px solid #ccc; border-radius: 4px; }

.gutter { width: 5px; flex: none; }
.gutter i { display: block; margin-top: 235px; height: 127px; background: #6a6a6a; }

.map { position: relative; width: 1397px; height: 595px; flex: none; background: #000; overflow: hidden; }
.map-svg { display: block; }
.map-t { fill: #e8e8e8; font-family: "Liberation Sans", sans-serif; font-size: 21px; text-anchor: middle; }
.map-ring { font-size: 22px; }
.axis-y { fill: #12e312; font-family: "Liberation Sans", sans-serif; font-size: 15px; text-anchor: middle; }
.axis-x { fill: #f00; font-family: "Liberation Sans", sans-serif; font-size: 18px; text-anchor: middle; }
.banner {
  position: absolute;
  left: 0;
  right: 0;
  bottom: 0;
  height: 34px;
  background: rgba(55, 55, 55, 0.82);
  display: flex;
  align-items: center;
  color: #f2f2f2;
  font-size: 15px;
  font-weight: 500;
  padding-left: 497px;
  gap: 2px;
  box-sizing: border-box;
}
.view-tools {
  position: absolute;
  right: 0;
  top: 0;
  width: 41px;
  height: 307px;
  background: #fff;
  border-radius: 0 0 0 3px;
  display: flex;
  flex-direction: column;
  align-items: center;
  padding-top: 14px;
  gap: 8px;
  box-sizing: border-box;
}
.view-tools hr { width: 30px; margin: 0; border: 0; border-top: 1px solid #bbb; }

.status { height: 35px; flex: none; display: flex; align-items: center; background: #fff; font-size: 14.5px; letter-spacing: 0.3px; color: #4c4c4c; }
.st { white-space: nowrap; flex: none; padding-left: 3px; box-sizing: border-box; }
.st1 { width: 112px; }
.st2 { width: 176px; }
.st3 { width: 138px; }
.st4 { width: 140px; }
.st-tools { display: flex; gap: 5px; align-items: center; }
.st-btn { width: 31px; height: 31px; border: 1px solid #b4b4b4; border-radius: 4px; box-sizing: border-box; display: flex; align-items: center; justify-content: center; gap: 2px; background: #fff; }
.st-wide { width: 44px; }
.st-btn .tri { border-width: 4px 3px 0; }
.st-on { background: #d5e6fa; border-color: #4a97ec; }

.taskbar {
  height: 48px;
  flex: none;
  display: flex;
  align-items: center;
  border-top: 1px solid #16304e;
  box-sizing: border-box;
  background: linear-gradient(90deg, #1c6ca6 0, #3b8fc4 300px, #7abde4 500px, #56a8dc 800px, #3d94cf 960px, #2575bd 1400px, #1c5aa0 1650px, #153e70 1900px);
}
.orb { margin-left: 12px; flex: none; }
.task {
  width: 67px;
  height: 46px;
  margin-left: 3px;
  flex: none;
  display: flex;
  align-items: center;
  justify-content: center;
  box-sizing: border-box;
  border: 1px solid rgba(20, 50, 80, 0.7);
  border-radius: 3px;
  background: rgba(255, 255, 255, 0.22);
}
.task-folder { width: 60px; margin-left: 17px; margin-right: 7px; }
.task-on { background: rgba(255, 255, 255, 0.75); }
.tile { width: 40px; height: 40px; background: #1f7fe8; border-radius: 8px; display: flex; align-items: center; justify-content: center; }
.tile-yu { background: #3c8df0; color: #fff; font-size: 30px; font-weight: 700; }
.tray { margin-left: auto; display: flex; align-items: center; height: 100%; gap: 11px; }
.tray-up { width: 0; height: 0; border-left: 5px solid transparent; border-right: 5px solid transparent; border-bottom: 6px solid #f4f4f4; margin-right: 14px; }
.clock { display: flex; flex-direction: column; align-items: center; width: 100px; margin-left: 16px; color: #fff; font-size: 15px; line-height: 21px; font-family: "Liberation Sans", sans-serif; }
.show-desk { width: 14px; height: 100%; background: linear-gradient(#6d8fb4, #3f5e82); border-left: 1px solid #0e2a4c; box-sizing: border-box; }

.tip {
  position: absolute;
  left: 1109px;
  top: 17px;
  width: 245px;
  height: 42px;
  background: #0a8bfb;
  border-radius: 4px;
  display: flex;
  align-items: center;
  color: #e9f4ff;
  padding-left: 8px;
  box-sizing: border-box;
}
.tip::after {
  content: "";
  position: absolute;
  right: -6px;
  top: 14px;
  border-left: 6px solid #0a8bfb;
  border-top: 7px solid transparent;
  border-bottom: 7px solid transparent;
}
.tip-btn { margin-left: 23px; width: 75px; height: 21px; line-height: 21px; text-align: center; background: rgba(255, 255, 255, 0.14); border-radius: 3px; }

.dialog {
  position: absolute;
  left: 636px;
  top: 141px;
  width: 627px;
  height: 538px;
  background: #fff;
  box-shadow: 0 0 12px rgba(0, 0, 0, 0.65);
  display: flex;
  flex-direction: column;
  padding: 0 14px 0 15px;
  box-sizing: border-box;
}
.dlg-head { height: 50px; flex: none; display: flex; align-items: center; justify-content: space-between; font-size: 17.5px; color: #505050; padding-right: 1px; }
.dlg-draw { background: #000; flex: none; display: block; }
.cad { font-family: "Liberation Serif", serif; font-size: 33px; }
.cad-w { fill: #eee; letter-spacing: 1px; }
.cad-lv { letter-spacing: 2.5px; }
.cad-s { font-size: 28px; }
.cad-g { fill: #10e010; }
.dlg-foot { display: flex; justify-content: flex-end; gap: 8px; padding-top: 7px; }
.dlg-btn { width: 100px; height: 33px; font: inherit; font-size: 14.5px; color: #444; background: #fff; border: 1px solid #d4d4d4; border-radius: 4px; }
.dlg-ok { background: #2f83e6; border-color: #2f83e6; color: #fff; }
</style>

<style>
html, body { margin: 0; padding: 0; overflow: hidden; }
</style>
